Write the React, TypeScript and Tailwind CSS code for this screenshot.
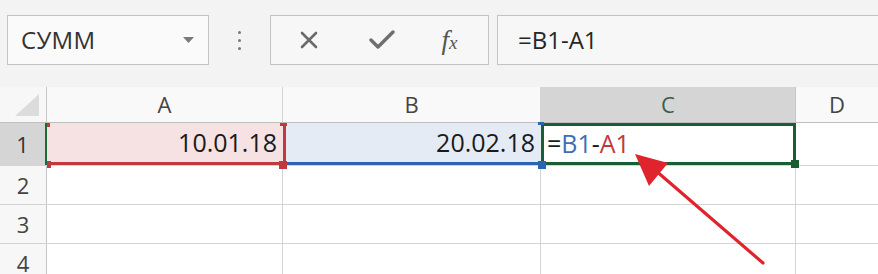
import React from "react";

const font = { fontFamily: '"Open Sans", "Noto Sans", sans-serif' };

function Handle({ x, y, w, h, c }: { x: number; y: number; w: number; h: number; c: string }) {
  return <rect x={x} y={y} width={w} height={h} fill={c} />;
}

export default function App() {
  return (
    <div className="relative w-[878px] h-[274px] overflow-hidden bg-white" style={font}>
      {/* Top bar */}
      <div className="flex h-[87px] bg-[#f3f3f3] pt-[15px]">
        <div className="ml-[7px] w-[202px] h-[50px] border border-[#c3c3c3] bg-[#fafafa] flex items-center justify-between pl-[13px] pr-[14px]">
          <span className="text-[24px] text-[#333] tracking-[0.3px]">СУММ</span>
          <svg width="11" height="6" viewBox="0 0 11 6">
            <polygon points="0,0 11,0 5.5,6" fill="#7a7a7a" />
          </svg>
        </div>
        <div className="w-[61px] h-[50px] flex flex-col items-center justify-center gap-[5px]">
          <div className="w-[3px] h-[3px] rounded-full bg-[#777]" />
          <div className="w-[3px] h-[3px] rounded-full bg-[#777]" />
          <div className="w-[3px] h-[3px] rounded-full bg-[#777]" />
        </div>
        <div className="w-[219px] h-[50px] border border-[#c3c3c3] bg-[#f7f7f7] flex items-center">
          <div className="w-[76px] flex justify-center">
            <svg width="20" height="20" viewBox="0 0 20 20">
              <path d="M3 3 L17 17 M17 3 L3 17" stroke="#6a6a6a" strokeWidth="2.6" strokeLinecap="round" />
            </svg>
          </div>
          <div className="w-[70px] flex justify-center">
            <svg width="26" height="22" viewBox="0 0 26 22">
              <path d="M2 11 L9 18 L24 3" stroke="#6f6f6f" strokeWidth="3.4" fill="none" strokeLinejoin="round" strokeLinecap="round" />
            </svg>
          </div>
          <div className="flex-1 flex justify-center pr-[6px]">
            <span className="text-[27px] italic text-[#555] leading-none" style={{ fontFamily: '"Liberation Serif", serif' }}>
              f<span className="text-[19px]">x</span>
            </span>
          </div>
        </div>
        <div className="ml-[8px] flex-1 h-[50px] border border-r-0 border-[#c3c3c3] bg-[#f7f7f7] flex items-center pl-[20px]">
          <span className="text-[24px] text-[#262626]">=B1-A1</span>
        </div>
      </div>

      {/* Grid */}
      <div className="flex flex-col">
        {/* Header row */}
        <div className="flex h-[36px] border-b border-[#bfbfbf]">
          <div className="w-[47px] bg-[#f7f7f7] border-r border-[#c6c6c6] flex items-end justify-end pr-[7px] pb-[6px]">
            <svg width="24" height="22" viewBox="0 0 24 22">
              <polygon points="24,0 24,22 0,22" fill="#dcdcdc" />
            </svg>
          </div>
          <div className="w-[236px] bg-[#f9f9f9] border-r border-[#d4d4d4] flex items-center justify-center text-[22px] text-[#444]">A</div>
          <div className="w-[258px] bg-[#f9f9f9] border-r border-[#d4d4d4] flex items-center justify-center text-[22px] text-[#444]">B</div>
          <div className="w-[255px] bg-[#d5d5d5] border-r border-[#c6c6c6] flex items-center justify-center text-[22px] text-[#3a5e46]">C</div>
          <div className="flex-1 bg-[#f9f9f9] flex items-center justify-center text-[22px] text-[#444]">D</div>
        </div>

        {/* Row 1 */}
        <div className="flex h-[43px] border-b border-[#d4d4d4]">
          <div className="w-[47px] bg-[#d5d5d5] border-r-[2px] border-[#1f6a3a] flex items-center justify-center text-[22px] text-[#333]">1</div>
          <div className="w-[236px] bg-[#f6e2e3] border-b-[3px] border-[#c0393f] flex items-center justify-end pr-[6px] text-[25px] text-[#1a1a1a]">10.01.18</div>
          <div className="w-[258px] bg-[#e5ebf5] border-l-[3px] border-l-[#c0393f] border-b-[3px] border-b-[#2d63b3] flex items-center justify-end pr-[6px] text-[25px] text-[#1a1a1a]">20.02.18</div>
          <div className="w-[255px] border-[3px] border-[#1b5e34] flex items-center pl-[3px] text-[25px] text-[#1a1a1a]">
            <span>=</span>
            <span className="text-[#3e6fb4]">B1</span>
            <span>-</span>
            <span className="text-[#c0393f]">A1</span>
          </div>
          <div className="flex-1" />
        </div>

        {/* Rows 2-4 */}
        {[
          { n: "2", h: "h-[39px]" },
          { n: "3", h: "h-[39px]" },
          { n: "4", h: "h-[39px]" },
        ].map((r) => (
          <div key={r.n} className={`flex ${r.h} border-b border-[#d4d4d4]`}>
            <div className="w-[47px] bg-[#f7f7f7] border-r border-[#c6c6c6] flex items-center justify-center text-[22px] text-[#444]">{r.n}</div>
            <div className="w-[236px] border-r border-[#d4d4d4]" />
            <div className="w-[258px] border-r border-[#d4d4d4]" />
            <div className="w-[255px] border-r border-[#d4d4d4]" />
            <div className="flex-1" />
          </div>
        ))}
      </div>

      {/* Overlay: handles and arrow */}
      <svg className="absolute left-0 top-0 pointer-events-none" width="878" height="274" viewBox="0 0 878 274">
        {/* A1 handles */}
        <Handle x={47} y={123} w={3} h={4} c="#c0393f" />
        <Handle x={47} y={161} w={4} h={7} c="#c0393f" />
        <Handle x={280} y={123} w={7} h={3} c="#c0393f" />
        <Handle x={279} y={161} w={8} h={8} c="#c0393f" />
        {/* B1 handles */}
        <Handle x={538} y={122} w={6} h={3} c="#2d63b3" />
        <Handle x={538} y={161} w={8} h={8} c="#2d63b3" />
        {/* C1 handle */}
        <Handle x={791} y={160} w={8} h={8} c="#1b5e34" />
        {/* Arrow */}
        <line x1="763" y1="263" x2="655" y2="170" stroke="#e0242e" strokeWidth="3.2" strokeLinecap="round" />
        <polygon points="635,154 668,163 649,186" fill="#e0242e" />
      </svg>
    </div>
  );
}
